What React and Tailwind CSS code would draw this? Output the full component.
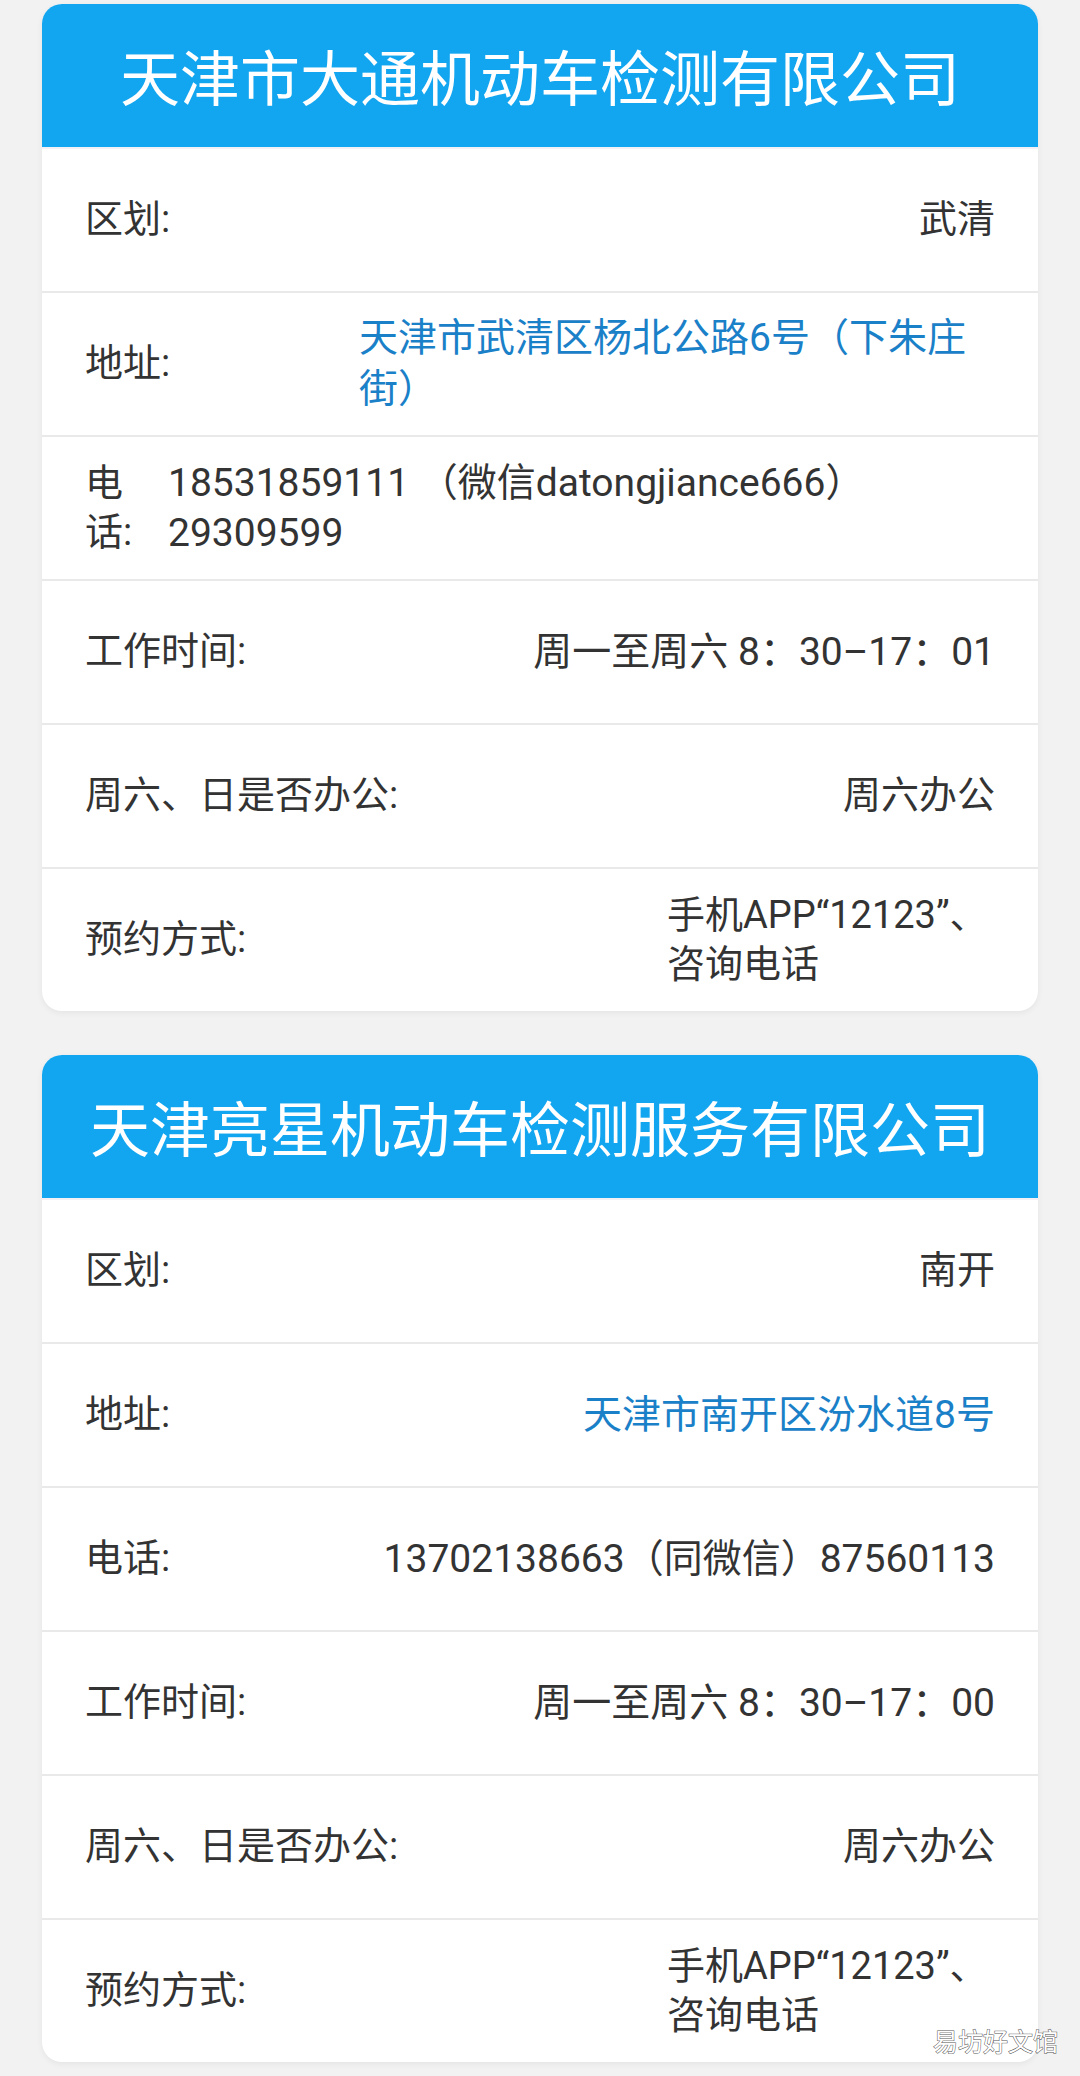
import React from "react";

const FONT = { fontFamily: 'Roboto, "Noto Sans CJK SC", sans-serif' };

function Row({ label, children, labelClass = "", valueClass = "", first = false }) {
  return (
    <div
      className={`h-[144px] flex items-center justify-between px-[43px] ${
        first ? "border-t-2 border-[#f3f0f6]" : "border-t-2 border-[#e9e9e9]"
      }`}
    >
      <div className={`shrink-0 text-[#333333] ${labelClass}`}>{label}</div>
      <div className={`text-[#333333] ${valueClass}`}>{children}</div>
    </div>
  );
}

function Card({ title, rows, className = "" }) {
  return (
    <div
      className={`bg-white rounded-[20px] overflow-hidden shadow-[0_2px_6px_rgba(0,0,0,0.06)] ${className}`}
    >
      <div className="h-[143px] bg-[#12a5f0] flex items-center justify-center pt-[10px] text-white text-[60px]">
        {title}
      </div>
      {rows}
    </div>
  );
}

export default function App() {
  const card1 = (
    <>
      <Row first label="区划:">武清</Row>
      <Row label="地址:" valueClass="w-[636px] text-left text-[39px] !text-[#1a80c8]">
        天津市武清区杨北公路6号（下朱庄街）
      </Row>
      <Row
        label={
          <>
            电<br />话:
          </>
        }
        labelClass="w-[50px]"
        valueClass="flex-1 pl-[33px] text-left text-[39px] leading-[50px]"
      >
        18531859111 （微信datongjiance666）
        <br />
        29309599
      </Row>
      <Row label="工作时间:" valueClass="text-[39px]">周一至周六 8：30–17：01</Row>
      <Row label="周六、日是否办公:">周六办公</Row>
      <Row label="预约方式:" valueClass="w-[328px] text-left">
        手机APP“12123”、
        <br />
        咨询电话
      </Row>
    </>
  );

  const card2 = (
    <>
      <Row first label="区划:">南开</Row>
      <Row label="地址:" valueClass="text-[39px] !text-[#1a80c8]">
        天津市南开区汾水道8号
      </Row>
      <Row label="电话:" valueClass="text-[39px]">13702138663（同微信）87560113</Row>
      <Row label="工作时间:" valueClass="text-[39px]">周一至周六 8：30–17：00</Row>
      <Row label="周六、日是否办公:">周六办公</Row>
      <Row label="预约方式:" valueClass="w-[328px] text-left">
        手机APP“12123”、
        <br />
        咨询电话
      </Row>
    </>
  );

  return (
    <div
      className="relative w-[1080px] min-h-[2076px] bg-[#f2f2f2] px-[42px] pt-[4px] text-[38px] leading-[1.3]"
      style={FONT}
    >
      <Card title="天津市大通机动车检测有限公司" rows={card1} />
      <Card title="天津亮星机动车检测服务有限公司" rows={card2} className="mt-[44px]" />
      <div className="absolute left-[933px] top-[2030px] text-[25px] leading-none text-white [-webkit-text-stroke:1px_#555555] [paint-order:stroke_fill]">
        易坊好文馆
      </div>
    </div>
  );
}
